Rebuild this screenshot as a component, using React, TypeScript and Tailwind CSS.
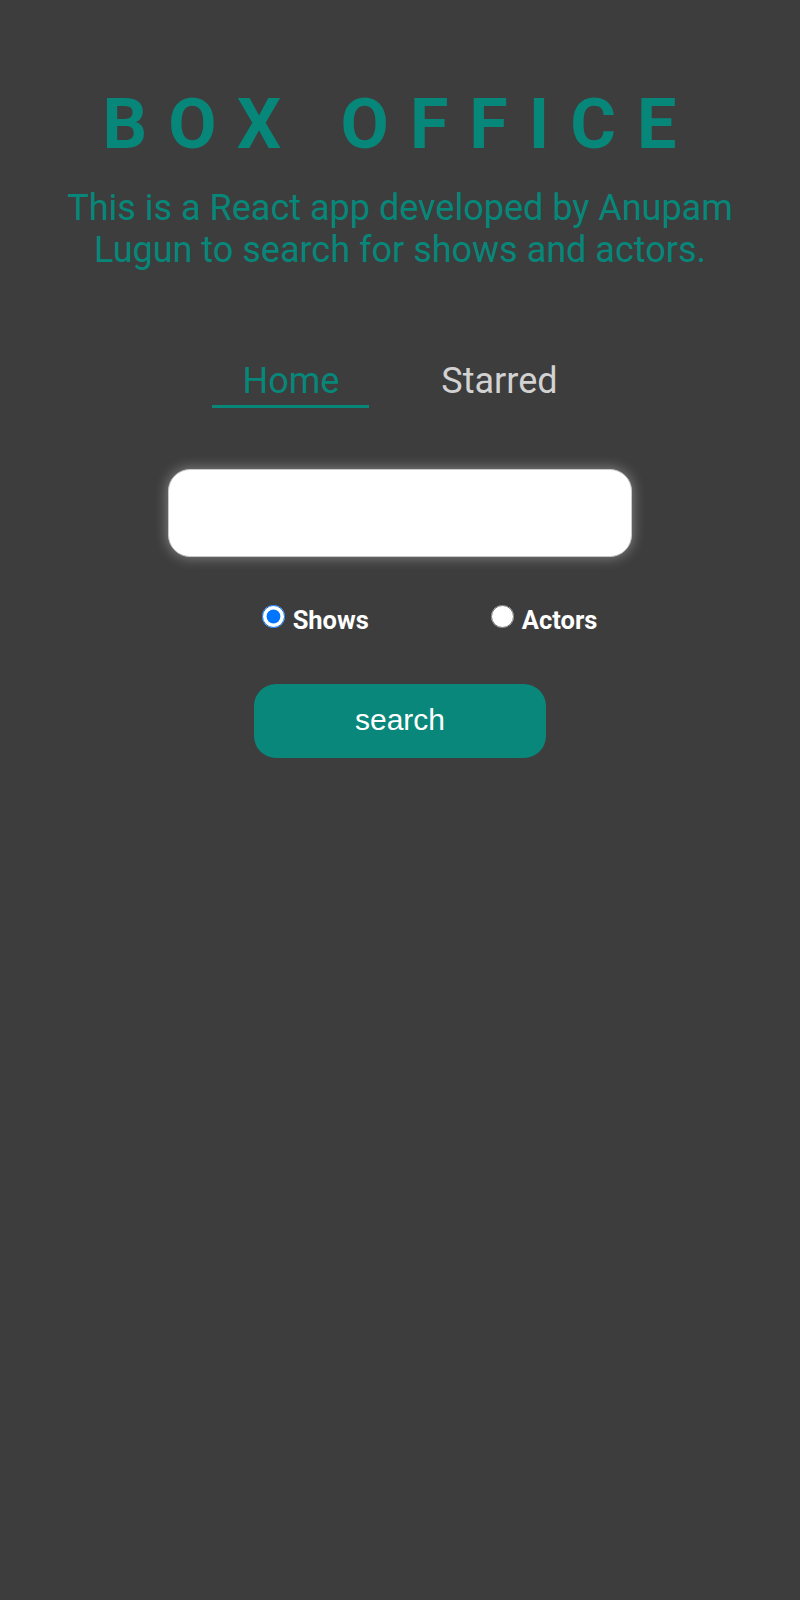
import React from "react";

export default function App() {
  return (
    <div className="min-h-[1600px] w-full bg-[#3d3d3d] flex flex-col items-center" style={{ fontFamily: "Roboto, 'Noto Sans', sans-serif" }}>
      <h1 className="mt-[89px] text-[70px] leading-[70px] font-bold tracking-[21px] text-[#07877a] whitespace-nowrap">
        BOX OFFICE
      </h1>
      <p className="mt-[28px] w-[720px] text-center text-[36px] leading-[42px] text-[#07877a]">
        This is a React app developed by Anupam Lugun to search for shows and actors.
      </p>
      <nav className="mt-[86px] flex items-start gap-[42px]">
        <a className="px-[30px] pt-[2px] pb-[2px] border-b-[3px] border-[#07877a] text-[36px] leading-[44px] text-[#07877a]">
          Home
        </a>
        <a className="px-[30px] pt-[2px] pb-[2px] border-b-[3px] border-transparent text-[36px] leading-[44px] text-[#d2d2d2]">
          Starred
        </a>
      </nav>
      <input
        type="text"
        className="mt-[61px] w-[464px] h-[88px] rounded-[22px] bg-white border border-[#c9c9c9] shadow-[0_0_14px_rgba(255,255,255,0.4)] outline-none px-5 text-[24px]"
      />
      <div className="mt-[48px] flex items-start gap-[122px] pl-[59px]">
        <label className="flex items-start gap-[8px] text-[25.5px] leading-[30px] font-bold text-white">
          <input type="radio" name="t" defaultChecked className="w-[23px] h-[23px] m-0" />
          <span>Shows</span>
        </label>
        <label className="flex items-start gap-[8px] text-[25.5px] leading-[30px] font-bold text-white">
          <input type="radio" name="t" className="w-[23px] h-[23px] m-0" />
          <span>Actors</span>
        </label>
      </div>
      <button
        className="mt-[49px] w-[292px] h-[74px] rounded-[22px] bg-[#08877a] text-white text-[30px] pb-[3px]"
        style={{ fontFamily: "'Liberation Sans', Arial, sans-serif" }}
      >
        search
      </button>
    </div>
  );
}
